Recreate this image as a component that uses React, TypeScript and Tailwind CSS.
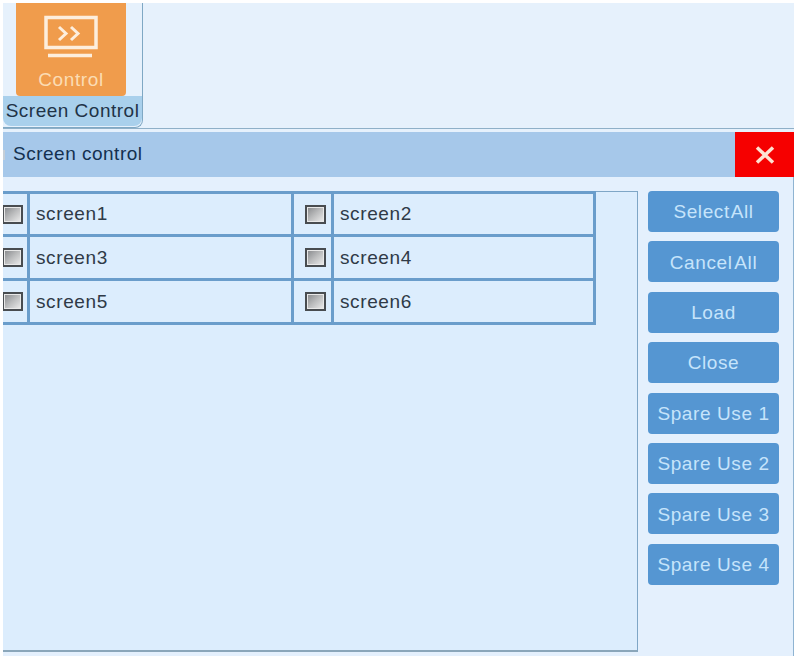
import React from "react";

const font = { fontFamily: '"Liberation Sans", Arial, sans-serif' };

const rows = [
  ["screen1", "screen2"],
  ["screen3", "screen4"],
  ["screen5", "screen6"],
];

const buttons = [
  { label: "Select All", cls: "[word-spacing:-4px]" },
  { label: "Cancel All", cls: "[word-spacing:-3px]" },
  { label: "Load", cls: "" },
  { label: "Close", cls: "" },
  { label: "Spare Use 1", cls: "" },
  { label: "Spare Use 2", cls: "" },
  { label: "Spare Use 3", cls: "" },
  { label: "Spare Use 4", cls: "" },
];

const CheckBox = () => (
  <div className="w-[21px] h-[19px] shrink-0 border-2 border-[#484c50] bg-gradient-to-br from-[#85878a] via-[#bcbdbe] to-[#eeeeee] shadow-[inset_0_0_0_1px_#e8e8e8]" />
);

const ControlIcon = () => (
  <svg width="54" height="44" viewBox="0 0 54 44" fill="none" stroke="#fdeedd" strokeWidth="3.5">
    <rect x="2" y="2.5" width="50" height="30" />
    <path d="M15 12l7 6.5-7 6.5M27 12l7 6.5-7 6.5" strokeWidth="3" />
    <path d="M4 40.5h44" />
  </svg>
);

export default function App() {
  return (
    <div className="w-[797px] h-[656px] bg-white pt-[3px] pl-[3px] pr-[3px] overflow-hidden flex flex-col" style={font}>
      {/* toolbar */}
      <div className="h-[125px] bg-[#e6f1fc] flex shrink-0">
        <div className="w-[140px] h-[125px] border-r border-b border-[#7fa8c4] rounded-br-lg flex flex-col">
          <div className="h-[93px] ml-[13px] mr-[16px] bg-[#f09c4c] rounded-b flex flex-col items-center">
            <div className="mt-[12px] h-[44px]">
              <ControlIcon />
            </div>
            <span className="mt-[11px] text-[19px] leading-[20px] tracking-[0.6px] text-[#fbdcb4]">Control</span>
          </div>
          <div className="h-[30px] pt-[1px] bg-[#a9d0ec] rounded-b-lg flex items-center justify-center text-[19px] tracking-[0.5px] text-[#1f3347] whitespace-nowrap">
            Screen Control
          </div>
        </div>
      </div>
      {/* window */}
      <div className="h-[4px] shrink-0 border-t border-[#8fb0c8] bg-[#e6f1fc]" />
      <div className="h-[45px] shrink-0 bg-[#a6c8ea] flex items-center justify-between">
        <div className="flex items-center">
          <div className="w-[2px] h-[10px] bg-[#c5cfd8]" />
          <span className="ml-[8px] text-[19px] tracking-[0.5px] text-[#14304f]">Screen control</span>
        </div>
        <div className="w-[59px] h-[45px] bg-[#f60000] flex items-center justify-center">
          <svg width="20" height="18" viewBox="0 0 20 18" stroke="#fde2d2" strokeWidth="3.5">
            <path d="M2 1.5l16 15M18 1.5l-16 15" />
          </svg>
        </div>
      </div>
      <div className="flex-1 min-h-0 bg-[#e4f0fd] border-r border-[#8fb4d2] flex pt-[14px]">
        <div className="w-[635px] h-[461px] bg-[#dcedfd] border-t border-r border-b-2 border-r-[#7fa6c6] border-t-[#7fa6c6] border-b-[#8aa6ba]">
          <div className="w-[593px] -mt-[1px] border-t-[3px] border-r-[3px] border-[#6a9dcb]">
            {rows.map((row) => (
              <div key={row[0]} className="h-[44px] first:h-[43px] flex border-b-[3px] border-[#6a9dcb]">
                <div className="w-[27px] flex items-center justify-end pr-[4px] border-r-[3px] border-[#6a9dcb] overflow-hidden">
                  <CheckBox />
                </div>
                <div className="w-[264px] flex items-center pl-[6px] pt-[1px] text-[19px] tracking-[0.6px] text-[#2f3a47] border-r-[3px] border-[#6a9dcb]">
                  {row[0]}
                </div>
                <div className="w-[40px] flex items-center pl-[11px] border-r-[3px] border-[#6a9dcb]">
                  <CheckBox />
                </div>
                <div className="flex-1 flex items-center pl-[6px] pt-[1px] text-[19px] tracking-[0.6px] text-[#2f3a47]">
                  {row[1]}
                </div>
              </div>
            ))}
          </div>
        </div>
        <div className="ml-[10px] w-[131px] flex flex-col gap-[9.4px]">
          {buttons.map((b) => (
            <button
              key={b.label}
              className={`h-[41px] shrink-0 pt-[2px] rounded-[4px] bg-[#5596d2] text-[19px] tracking-[0.6px] text-[#c6e4fb] whitespace-nowrap ${b.cls}`}
            >
              {b.label}
            </button>
          ))}
        </div>
      </div>
    </div>
  );
}
